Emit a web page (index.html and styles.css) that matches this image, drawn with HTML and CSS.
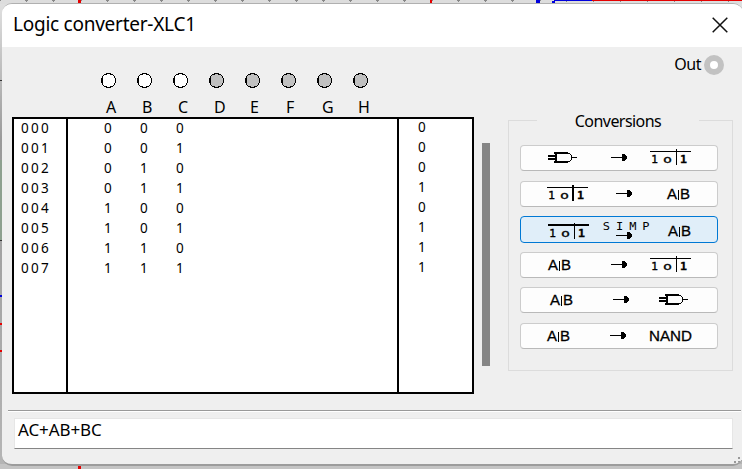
FILE: index.html
```html
<!DOCTYPE html>
<html lang="en">
<head>
<meta charset="utf-8">
<title>Logic converter-XLC1</title>
<link rel="stylesheet" href="styles.css">
</head>
<body>
<svg class="canvas" width="742" height="469" aria-hidden="true" shape-rendering="crispEdges">
  <defs>
    <linearGradient id="shade" x2="0" y2="1"><stop offset="0" stop-color="#e2e2e2"/><stop offset=".3" stop-color="#999"/><stop offset="1" stop-color="#b5b5b5"/></linearGradient>
    <pattern id="ticks" width="27" height="27" patternUnits="userSpaceOnUse"><path fill="#888" d="M25 0h2v1h-2zM0 0h1v1H0zM26 1h1v1h-1z"/></pattern>
    <g id="gate">
      <path d="M0 3h9v2H0zM0 6h9v2H0zM7 1h2v9H7zM6 0h14v2H6zM6 9h14v2H6zM20 1h2v1h-2zM22 2h1v1h-1zM23 3h1v5h-1zM22 8h1v1h-1zM20 9h2v1h-2zM24 5h5v1h-5z"/>
    </g>
    <g id="arrow"><path d="M0 3h16v1H0zM11 0h3v1h1v1h1v3h-1v1h-1v1h-3z"/></g>
    <g id="table" class="bits">
      <path d="M0 2h41v1H0zM26 0h1v16h-1z"/>
      <text x="1" y="14" textLength="7" lengthAdjust="spacingAndGlyphs">1</text>
      <text x="13" y="14" textLength="9" lengthAdjust="spacingAndGlyphs">o</text>
      <text class="strong" x="30" y="14" textLength="7" lengthAdjust="spacingAndGlyphs">1</text>
    </g>
    <g id="expr" class="letters">
      <text x="0" y="11">A</text><path d="M11 2h1v10h-1z"/><text x="13" y="11">B</text>
    </g>
  </defs>
  <rect width="742" height="469" fill="url(#shade)"/>
  <rect width="742" height="4" fill="#ddd"/>
  <rect y="464" width="742" height="5" fill="#c4c4c4"/>
  <rect width="742" height="2" fill="url(#ticks)"/>
  <path fill="#8da08f" d="M0 160h2v80H0z"/>
  <path fill="#333" d="M0 80h2v1H0zM0 240h2v1H0z"/>
  <path fill="#e60000" d="M78 0h3v4h-3zM430 0h2v3h-2zM592 0h150v1H592zM0 323h2v2H0zM0 350h2v2H0zM78 465h3v4h-3z"/>
  <path fill="#00d" d="M536 0h4v4h-4zM554 0h38v1h-38zM552 1h3v2h-3zM0 295h2v2H0z"/>
</svg>
<main class="window">
  <header class="titlebar">
    <h1>Logic converter-XLC1</h1>
    <svg class="close" width="16" height="16" viewBox="0 0 16 16"><path d="M.7.7l14.6 14.6M15.3.7L.7 15.3"/></svg>
  </header>
  <section class="work">
    <div class="truth">
      <ul class="terminals">
        <li class="on"><svg><use href="#ring"/></svg>A</li><li class="on"><svg><use href="#ring"/></svg>B</li><li class="on"><svg><use href="#ring"/></svg>C</li><li><svg><use href="#ring"/></svg>D</li><li><svg><use href="#ring"/></svg>E</li><li><svg><use href="#ring"/></svg>F</li><li><svg><use href="#ring"/></svg>G</li><li><svg><use href="#ring"/></svg>H</li>
      </ul>
      <div class="grid">
        <div class="index"><p>000</p><p>001</p><p>002</p><p>003</p><p>004</p><p>005</p><p>006</p><p>007</p></div>
        <div class="inputs">
          <p><b>0</b><b>0</b><b>0</b></p><p><b>0</b><b>0</b><b>1</b></p><p><b>0</b><b>1</b><b>0</b></p><p><b>0</b><b>1</b><b>1</b></p><p><b>1</b><b>0</b><b>0</b></p><p><b>1</b><b>0</b><b>1</b></p><p><b>1</b><b>1</b><b>0</b></p><p><b>1</b><b>1</b><b>1</b></p>
        </div>
        <div class="result"><p>0</p><p>0</p><p>0</p><p>1</p><p>0</p><p>1</p><p>1</p><p>1</p></div>
      </div>
    </div>
    <div class="scroll"></div>
    <div class="side">
      <div class="out"><span>Out</span><i></i></div>
      <div class="panel">
        <h2>Conversions</h2>
        <button><svg><use href="#gate" x="28" y="7"/><use href="#arrow" x="91" y="9"/><use href="#table" x="130" y="4"/></svg></button>
        <button><svg><use href="#table" x="27" y="4"/><path d="M52 4h1v16h-1z"/><use href="#arrow" x="96" y="9"/><use href="#expr" x="147" y="7"/></svg></button>
        <button class="active"><svg><path d="M28 7h41v1H28z"/><use href="#table" x="28" y="6"/><text class="simp" x="69" y="13" transform="scale(1.2 1)" textLength="39">SIMP</text><use href="#arrow" x="96" y="15"/><use href="#expr" x="148" y="8"/></svg></button>
        <button><svg><use href="#expr" x="28" y="7"/><use href="#arrow" x="91" y="9"/><use href="#table" x="130" y="4"/></svg></button>
        <button><svg><use href="#expr" x="30" y="7"/><use href="#arrow" x="93" y="9"/><use href="#gate" x="139" y="7"/></svg></button>
        <button><svg><use href="#expr" x="27" y="7"/><use href="#arrow" x="90" y="9"/><text class="letters" x="129" y="18" textLength="43" lengthAdjust="spacingAndGlyphs">NAND</text></svg></button>
      </div>
    </div>
  </section>
  <footer><div class="expression">AC+AB+BC</div></footer>
  <svg class="grip" width="9" height="11" shape-rendering="crispEdges"><path d="M8 0h1v2H8zM4 4h2v2H4zM8 4h1v2H8zM0 8h2v2H0zM4 8h2v2H4zM8 8h1v2H8z"/></svg>
</main>
<svg width="0" height="0" class="defs"><defs><path id="ring" d="M5 0h5v1H5zM3 1h3v1H3zM9 1h3v1H9zM2 2h1v1H2zM12 2h1v1h-1zM1 3h1v2H1zM13 3h1v2h-1zM0 5h1v5H0zM1 5h1v5H1zM14 5h1v5h-1zM1 10h1v2H1zM13 10h1v2h-1zM2 12h1v1H2zM12 12h1v1h-1zM3 13h3v1H3zM9 13h3v1H9zM5 14h5v1H5z"/></defs></svg>
</body>
</html>
```

FILE: styles.css
```css
* { box-sizing: border-box; }
body { margin: 0; width: 742px; height: 469px; overflow: hidden; position: relative; padding: 3px 0 0 2px; font: 16px/20px "Noto Sans", sans-serif; color: #000; }
h1, h2, p, ul { margin: 0; padding: 0; font-weight: normal; }
.canvas { position: absolute; left: 0; top: 0; z-index: -1; }
.defs { position: absolute; }
.window { position: relative; display: flex; flex-direction: column; width: 741px; height: 463px; background: #efefef; border-top: 1px solid #b0b0b0; border-bottom: 2px solid #9c9c9c; border-radius: 10px; overflow: hidden; }
.titlebar { height: 43px; flex: none; background: #fff; display: flex; align-items: center; justify-content: space-between; padding: 0 15px 2px 11px; }
h1 { font-size: 19px; line-height: 26px; letter-spacing: -.25px; white-space: nowrap; padding-bottom: 1px; }
.close { fill: none; stroke: #111; stroke-width: 1.5; }
.work { display: flex; height: 363px; padding-left: 10px; flex: none; }
.truth { width: 462px; }
.terminals { list-style: none; display: flex; padding: 26px 0 0 89px; height: 70px; }
.terminals li { width: 36px; flex: none; display: flex; flex-direction: column; line-height: 22px; text-indent: 5px; }
.terminals svg { flex: none; width: 15px; height: 15px; margin-bottom: 8px; shape-rendering: crispEdges; background: radial-gradient(circle, #c0c0c0 6.5px, transparent 7px); }
.terminals .on svg { background: radial-gradient(circle, #fff 6.5px, transparent 7px); }
.grid { height: 277px; display: grid; grid-template-columns: 54px 331px 1fr; background: #fff; border: 2px solid #000; font-size: 13.5px; }
.grid p { height: 20px; line-height: 19px; }
.index { border-right: 2px solid #000; padding-left: 7px; letter-spacing: 2.3px; }
.inputs { border-right: 2px solid #000; padding-left: 36px; }
.inputs p { display: flex; }
.inputs b { font-weight: normal; width: 36px; }
.result { padding-left: 19px; }
.result p { position: relative; top: -1px; }
.scroll { width: 8px; height: 223px; margin: 96px 18px 0 8px; background: #858585; }
.side { width: 226px; }
.out { display: flex; justify-content: flex-end; align-items: center; gap: 3px; height: 20px; margin-top: 8px; padding-right: 10px; letter-spacing: -.5px; }
.out span { padding-bottom: 2px; }
.out i { width: 20px; height: 20px; border: 6px solid #c2c2c2; border-radius: 50%; background: #fff; }
.panel { width: 225px; height: 251px; margin-top: 45px; border: 1px solid #dcdcdc; padding: 0 0 0 11px; display: flex; flex-direction: column; gap: 9.6px; }
h2 { font-size: 16px; line-height: 22px; width: 162px; height: 22px; text-align: center; background: #efefef; margin: -11px 0 3.4px 17px; letter-spacing: -.55px; flex: none; }
button { display: block; flex: none; width: 198px; height: 26px; padding: 0; background: #fdfdfd; border: 1px solid #ccc; border-bottom-color: #b9b9b9; border-radius: 4px; }
button svg { display: block; width: 198px; height: 26px; margin: -1px; overflow: visible; shape-rendering: crispEdges; }
button.active { background: #e0eef9; border-color: #0078d4; height: 27px; margin-bottom: -1px; }
.bits { font: 11px "DejaVu Sans Mono", monospace; stroke: #000; stroke-width: .3px; }
.bits path { stroke: none; }
.bits .strong { font-weight: bold; }
.letters { font: 15px "Liberation Sans", sans-serif; stroke: #000; stroke-width: .3px; }
#expr path { stroke: none; }
.simp { font: 10px "DejaVu Sans Mono", monospace; }
footer { height: 56px; padding: 7px 8px 0 6px; border-top: 1px solid #999; box-shadow: inset 0 1px #fff; margin-left: 6px; margin-right: 2px; }
.expression { height: 31px; background: #fff; border: 1px solid #e6e6e6; border-bottom-color: #858585; padding-left: 3px; line-height: 22px; font-size: 17px; letter-spacing: -.1px; }
.grip { position: absolute; right: 0; bottom: 0; fill: #999; }
```
